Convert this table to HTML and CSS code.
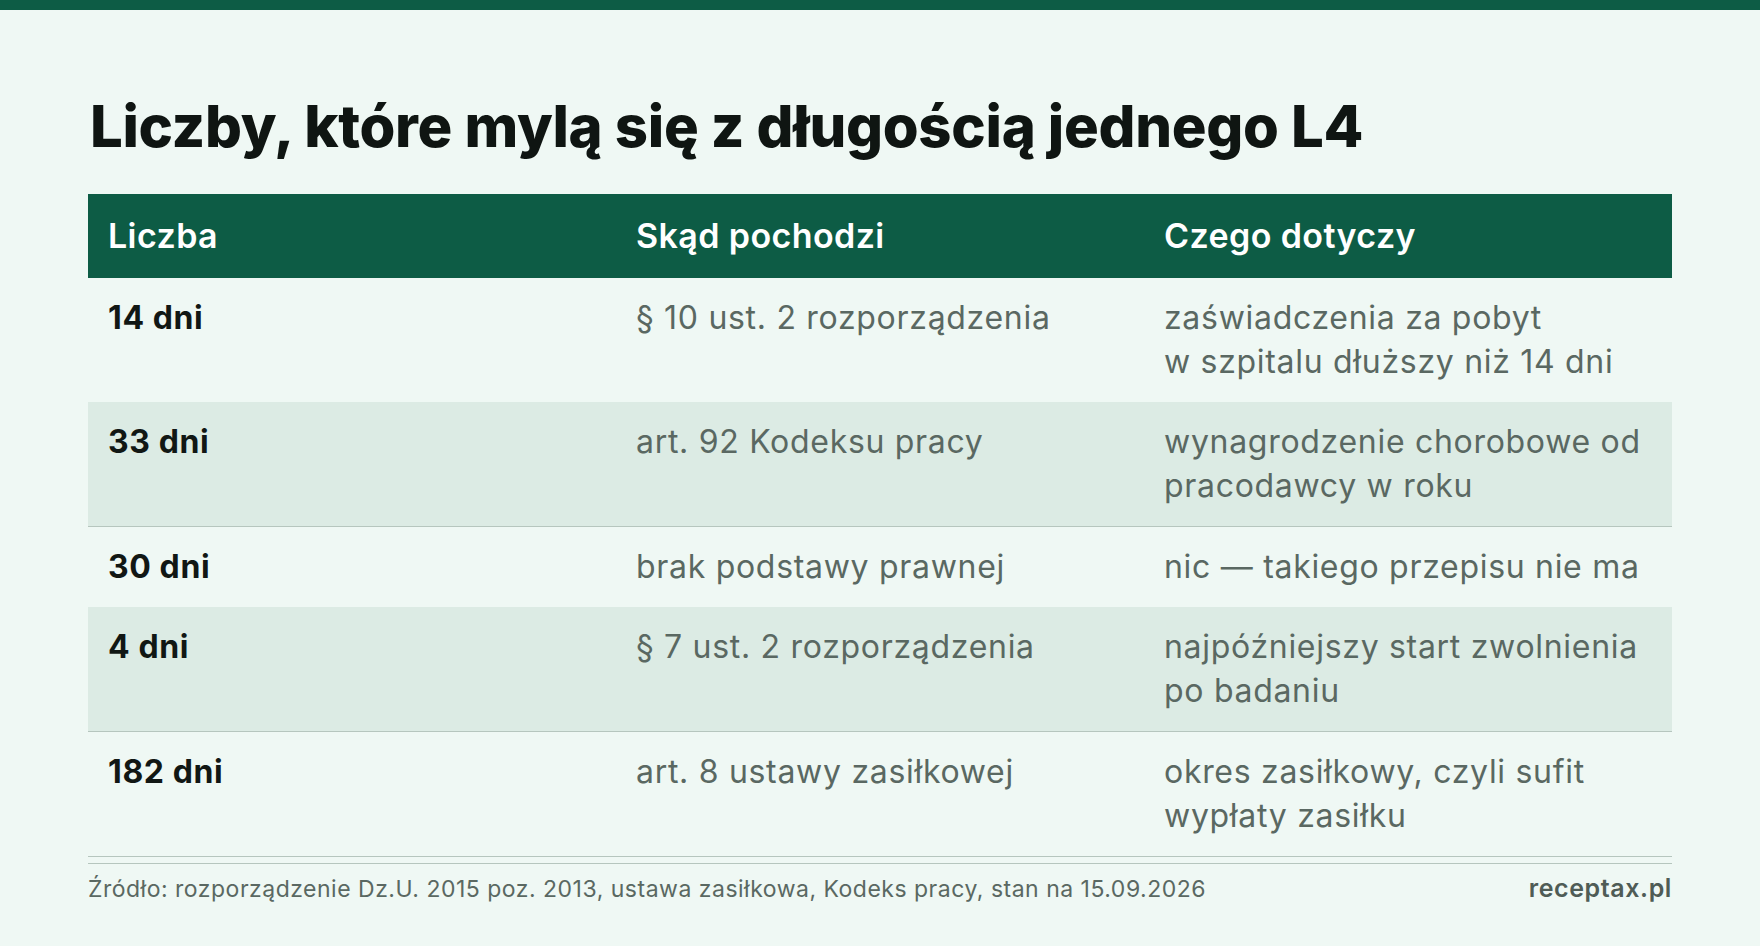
FILE: index.html
```html
<!DOCTYPE html>
<html lang="pl">
<head>
<meta charset="utf-8">
<title>Liczby, które mylą się z długością jednego L4</title>
<link rel="stylesheet" href="styles.css">
</head>
<body>
<div class="topbar"></div>
<main class="page">
  <h1 class="title">Liczby, które mylą się z długością jednego L4</h1>
  <table class="facts">
    <thead>
      <tr>
        <th>Liczba</th>
        <th>Skąd pochodzi</th>
        <th>Czego dotyczy</th>
      </tr>
    </thead>
    <tbody>
      <tr>
        <td class="num">14 dni</td>
        <td>§ 10 ust. 2 rozporządzenia</td>
        <td>zaświadczenia za pobyt<br>w szpitalu dłuższy niż 14 dni</td>
      </tr>
      <tr class="alt">
        <td class="num">33 dni</td>
        <td>art. 92 Kodeksu pracy</td>
        <td>wynagrodzenie chorobowe od<br>pracodawcy w roku</td>
      </tr>
      <tr>
        <td class="num">30 dni</td>
        <td>brak podstawy prawnej</td>
        <td>nic — takiego przepisu nie ma</td>
      </tr>
      <tr class="alt">
        <td class="num">4 dni</td>
        <td>§ 7 ust. 2 rozporządzenia</td>
        <td>najpóźniejszy start zwolnienia<br>po badaniu</td>
      </tr>
      <tr class="last">
        <td class="num">182 dni</td>
        <td>art. 8 ustawy zasiłkowej</td>
        <td>okres zasiłkowy, czyli sufit<br>wypłaty zasiłku</td>
      </tr>
    </tbody>
  </table>
  <footer class="foot">
    <span class="source">Źródło: rozporządzenie Dz.U. 2015 poz. 2013, ustawa zasiłkowa, Kodeks pracy, stan na 15.09.2026</span>
    <span class="brand">receptax.pl</span>
  </footer>
</main>
</body>
</html>
```

FILE: styles.css
```css
html, body {
  margin: 0;
  padding: 0;
}
body {
  background: #eff8f4;
  font-family: Inter, "Noto Sans", sans-serif;
  color: #111714;
  width: 1760px;
  height: 946px;
  overflow: hidden;
}
.topbar {
  height: 10px;
  background: #0d5c45;
}
.page {
  padding: 87px 88px 0 88px;
}
.title {
  margin: 0 0 39px 0;
  font-size: 58px;
  line-height: 58px;
  font-weight: 800;
  letter-spacing: -0.3px;
  color: #0f1512;
  padding-left: 2px;
}
.facts {
  width: 100%;
  border-collapse: collapse;
  table-layout: fixed;
}
.facts th {
  background: #0d5c45;
  color: #ffffff;
  text-align: left;
  font-size: 34px;
  line-height: 44px;
  font-weight: 600;
  padding: 20px 20px;
  letter-spacing: 0.4px;
}
.facts td {
  vertical-align: top;
  padding: 18px 20px 18px 20px;
  font-size: 32px;
  line-height: 44px;
  color: #5a6862;
  font-weight: 400;
  letter-spacing: 0.7px;
  white-space: nowrap;
}
.facts td.num {
  color: #111714;
  font-weight: 700;
  letter-spacing: 0.6px;
}
.facts tr.alt td {
  background: #dcebe4;
  border-bottom: 1px solid #b6c6be;
}
.facts tr.last td {
  border-bottom: 1px solid #b6c6be;
}
.foot {
  margin-top: 6px;
  border-top: 1px solid #b6c6be;
  display: flex;
  justify-content: space-between;
  align-items: baseline;
  padding-top: 8px;
  font-size: 23px;
  line-height: 32px;
  color: #5a6862;
  letter-spacing: 0.5px;
}
.brand {
  font-weight: 600;
  color: #4f5c56;
  font-size: 25px;
  letter-spacing: 0.6px;
}
```
